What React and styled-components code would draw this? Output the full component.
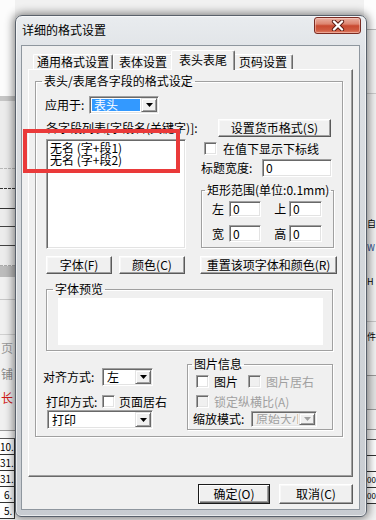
import React from 'react';
import styled, { createGlobalStyle, css } from 'styled-components';

const FONT = `"Noto Sans CJK SC", "Liberation Sans", sans-serif`;

const GlobalStyle = createGlobalStyle`
  html, body { margin: 0; padding: 0; }
  body { width: 376px; height: 520px; overflow: hidden; background: #f3f3f3; font-family: ${FONT}; }
`;

const Screen = styled.div`
  position: relative;
  width: 376px;
  height: 520px;
  overflow: hidden;
  font-family: ${FONT};
  font-size: 12px;
  color: #000;
`;

/* ---------- background page behind the dialog ---------- */
const Backdrop = styled.div`
  display: flex;
  justify-content: space-between;
  width: 376px;
  height: 520px;
  background: #f1f1f1;
`;

const Strip = styled.div`
  display: flex;
  flex-direction: column;
  width: ${p => p.$w}px;
  overflow: hidden;
`;

const BgCell = styled.div`
  flex: none;
  box-sizing: border-box;
  height: ${p => p.$h}px;
  background: ${p => p.$bg || 'transparent'};
  border-bottom: ${p => p.$line || 'none'};
  border-right: ${p => p.$edge || 'none'};
  color: ${p => p.$color || '#000'};
  font-family: ${FONT};
  font-size: ${p => p.$fs || 10}px;
  line-height: ${p => p.$h - 1}px;
  text-align: ${p => p.$align || 'left'};
  padding: 0 ${p => p.$pr || 0}px 0 ${p => p.$pl || 0}px;
  white-space: nowrap;
`;

const LEFT = [
  { h: 96, bg: '#fcfcfc' },
  { h: 5, bg: '#c6c6c6' },
  { h: 68, bg: '#ececec', line: '1px dashed #b8b8b8' },
  { h: 20, bg: '#ececec', line: '1px dashed #333' },
  { h: 20, bg: '#ececec', line: '1px solid #333' },
  { h: 18, bg: '#ececec', line: '1px solid #444' },
  { h: 19, bg: '#ececec', line: '1px solid #444' },
  { h: 20, bg: '#ececec', line: '1px dashed #aaa' },
  { h: 11, bg: '#bcbcbc' },
  { h: 23, bg: '#f0f0f0', line: '1px solid #c8c8c8' },
  { h: 35, bg: '#f0f0f0', line: '1px solid #d0d0d0' },
  { h: 26, bg: '#f0f0f0', t: '页', color: '#9a9a9a', pl: 1, fs: 12 },
  { h: 26, bg: '#f0f0f0', t: '铺', color: '#8a8a8a', pl: 1, fs: 12 },
  { h: 22, bg: '#f0f0f0', t: '长', color: '#d01818', pl: 1, fs: 12 },
  { h: 22, bg: '#f0f0f0', line: '1px solid #9a9a9a' },
  { h: 8, bg: '#f7f7f7', line: '1px solid #555' },
  { h: 16, bg: '#fff', t: '10.', pl: 0, line: '1px solid #333', edge: '1px solid #333' },
  { h: 16, bg: '#fff', t: '31.', pl: 0, line: '1px solid #333', edge: '1px solid #333' },
  { h: 16, bg: '#fff', t: '31.', pl: 0, line: '1px solid #333', edge: '1px solid #333' },
  { h: 16, bg: '#fff', t: '6.', pl: 4, line: '1px solid #333', edge: '1px solid #333' },
  { h: 16, bg: '#fff', t: '5.', pl: 4, line: '1px solid #333', edge: '1px solid #333' },
];

const RIGHT = [
  { h: 30, bg: '#fdfdfd', line: '1px solid #bbb' },
  { h: 64, bg: '#f4f4f4', line: '1px solid #ccc' },
  { h: 120, bg: '#f2f2f2' },
  { h: 20, bg: '#f2f2f2', t: '自', pl: 3, fs: 9 },
  { h: 28, bg: '#f2f2f2', t: 'W', color: '#2a4a8a', pl: 3, fs: 9 },
  { h: 40, bg: '#f2f2f2', t: 'H', pl: 3, fs: 9 },
  { h: 20, bg: '#f2f2f2', line: '1px solid #c8c8c8' },
  { h: 30, bg: '#f2f2f2', t: '件', pl: 3, fs: 9 },
  { h: 24, bg: '#f2f2f2', line: '1px solid #9a9a9a' },
  { h: 34, bg: '#e4e4e4', line: '1px solid #9a9a9a' },
  { h: 20, bg: '#f2f2f2', line: '1px solid #999' },
  { h: 10, bg: '#f7f7f7', line: '1px solid #555' },
  { h: 16, bg: '#fff', line: '1px solid #333' },
  { h: 16, bg: '#fff', line: '1px solid #333' },
  { h: 16, bg: '#fff', t: '00', pl: 3, fs: 8, line: '1px solid #333' },
  { h: 16, bg: '#fff', t: '00', pl: 3, fs: 8, line: '1px solid #333' },
];

/* ---------- window ---------- */
const Window = styled.div`
  position: absolute;
  left: 15px;
  top: 15px;
  width: 352px;
  height: 502px;
  box-sizing: border-box;
  display: flex;
  flex-direction: column;
  border: 1px solid #59616b;
  border-radius: 7px 7px 6px 6px;
  background: linear-gradient(180deg, #e9ecef 0%, #dde0e4 10%, #d3d7db 55%, #c8ccd1 100%);
  box-shadow: 0 0 8px 2px rgba(0, 0, 0, 0.45), inset 0 0 0 1px rgba(255, 255, 255, 0.6);
`;

const TitleBar = styled.div`
  flex: none;
  display: flex;
  align-items: flex-start;
  justify-content: space-between;
  height: 29px;
  padding: 0 5px 0 6px;
`;

const Title = styled.div`
  margin-top: 7px;
  font-size: 12px;
  line-height: 14px;
  color: #000;
`;

const CloseButton = styled.div`
  margin-top: 1px;
  width: 47px;
  height: 17px;
  box-sizing: border-box;
  display: flex;
  align-items: center;
  justify-content: center;
  border: 1px solid #7a2b22;
  border-radius: 3px;
  background: linear-gradient(180deg, #eab0a2 0%, #dd8570 40%, #c94a31 52%, #cf5a40 80%, #e08068 100%);
  box-shadow: inset 0 0 0 1px rgba(255, 220, 210, 0.45);
`;

const Client = styled.div`
  flex: 1;
  margin: 0 6px 6px 5px;
  box-sizing: border-box;
  border: 1px solid #8e969e;
  background: #f0f0f0;
  display: flex;
  flex-direction: column;
`;

const TabStrip = styled.div`
  display: flex;
  align-items: flex-end;
  height: 19px;
  margin-top: 4px;
  padding-left: 11px;
`;

const Tab = styled.div`
  box-sizing: border-box;
  width: ${p => p.$w}px;
  height: 15px;
  display: flex;
  align-items: center;
  justify-content: center;
  border: 1px solid;
  border-bottom: none;
  border-color: #fff #696969 transparent #fff;
  border-radius: 2px 2px 0 0;
  box-shadow: inset -1px 0 0 #a0a0a0;
  font-size: 12px;
  line-height: 14px;
  white-space: nowrap;
  ${p => p.$active && css`
    position: relative;
    z-index: 1;
    width: ${p.$w + 4}px;
    height: 20px;
    margin: 0 -2px -1px;
    padding-bottom: 2px;
    background: #f0f0f0;
  `}
`;

const TabPage = styled.div`
  box-sizing: border-box;
  height: 408px;
  margin: 0 6px;
  padding: 4px 0 0 6px;
  border: 1px solid;
  border-color: #fff #696969 #696969 #fff;
  box-shadow: inset -1px -1px 0 #a0a0a0;
`;

const Group = styled.fieldset`
  box-sizing: border-box;
  width: ${p => p.$w}px;
  margin: ${p => p.$mt || 0}px 0 0 ${p => p.$ml || 0}px;
  padding: 0;
  min-width: 0;
  border: 1px solid #a0a0a0;
  box-shadow: inset 1px 1px 0 #fff, 1px 1px 0 #fff;
`;

const Legend = styled.legend`
  margin-left: ${p => p.$ml}px;
  padding: 0 2px;
  font-size: 12px;
  line-height: 14px;
  color: #000;
`;

const GroupBody = styled.div`
  display: flex;
  flex-direction: column;
  padding: 0 8px 6px 10px;
`;

const Row = styled.div`
  display: flex;
  align-items: center;
  height: ${p => p.$h}px;
  margin-top: ${p => p.$mt || 0}px;
  margin-left: ${p => p.$ml || 0}px;
  justify-content: ${p => p.$justify || 'flex-start'};
`;

const Label = styled.span`
  flex: none;
  width: ${p => (p.$w ? `${p.$w}px` : 'auto')};
  margin-left: ${p => p.$ml || 0}px;
  font-size: 12px;
  line-height: 14px;
  white-space: nowrap;
  text-align: ${p => p.$align || 'left'};
  color: ${p => (p.$disabled ? '#a0a0a0' : '#000')};
`;

const sunken = css`
  box-sizing: border-box;
  border: 1px solid;
  border-color: #a0a0a0 #fff #fff #a0a0a0;
  box-shadow: inset 1px 1px 0 #696969, inset -1px -1px 0 #e3e3e3;
`;

const TextBox = styled.div`
  ${sunken};
  flex: none;
  width: ${p => p.$w}px;
  height: ${p => p.$h}px;
  margin-right: ${p => p.$mr || 0}px;
  background: #fff;
  padding: 0 3px;
  font-size: 12px;
  line-height: ${p => p.$h - 2}px;
`;

const ListBox = styled.div`
  ${sunken};
  height: 110px;
  background: #fff;
  padding: 2px 3px;
  display: flex;
  flex-direction: column;
`;

const ListItem = styled.div`
  height: 12px;
  font-size: 12px;
  line-height: 12px;
  white-space: nowrap;
`;

const Combo = styled.div`
  ${sunken};
  flex: none;
  display: flex;
  width: ${p => p.$w}px;
  height: ${p => p.$h}px;
  margin-left: ${p => p.$ml || 0}px;
  padding: 1px;
  background: ${p => (p.$disabled ? '#f0f0f0' : '#fff')};
`;

const ComboText = styled.div`
  flex: 1;
  min-width: 0;
  white-space: nowrap;
  font-size: 12px;
  line-height: 12px;
  display: flex;
  align-items: center;
  padding-left: 2px;
  margin: 1px;
  ${p => p.$clip && css`overflow: hidden;`}
  color: ${p => (p.$disabled ? '#a0a0a0' : p.$selected ? '#fff' : '#000')};
  background: ${p => (p.$selected ? '#3399ff' : 'transparent')};
`;

const ComboArrow = styled.div`
  flex: none;
  box-sizing: border-box;
  width: 16px;
  display: flex;
  align-items: center;
  justify-content: center;
  background: #f0f0f0;
  border: 1px solid;
  border-color: #e3e3e3 #696969 #696969 #e3e3e3;
  box-shadow: inset 1px 1px 0 #fff, inset -1px -1px 0 #a0a0a0;
`;

const Button = styled.div`
  box-sizing: border-box;
  flex: none;
  width: ${p => p.$w}px;
  height: ${p => p.$h || 18}px;
  margin-right: ${p => p.$mr || 0}px;
  display: flex;
  align-items: center;
  justify-content: center;
  background: #f0f0f0;
  border: 1px solid;
  border-color: #fff #5a5a5a #5a5a5a #fff;
  box-shadow: inset -1px -1px 0 #a0a0a0, inset 1px 1px 0 #f8f8f8;
  font-size: 12px;
  line-height: 14px;
  white-space: nowrap;
  ${p => p.$default && css`
    border-color: #1a1a1a;
    box-shadow: inset 1px 1px 0 #fff, inset -1px -1px 0 #696969, inset -2px -2px 0 #a0a0a0;
  `}
`;

const Check = styled.span`
  ${sunken};
  flex: none;
  display: inline-block;
  width: 13px;
  height: 13px;
  margin-right: ${p => p.$mr || 5}px;
  background: ${p => (p.$disabled ? '#f0f0f0' : '#fff')};
`;

const TwoCols = styled.div`
  display: grid;
  grid-template-columns: 140px 134px;
  column-gap: 14px;
  margin-top: ${p => p.$mt || 0}px;
  height: ${p => (p.$h ? `${p.$h}px` : 'auto')};
`;

const Column = styled.div`
  display: flex;
  flex-direction: column;
`;

const ButtonPair = styled.div`
  display: flex;
  gap: 7px;
`;

const RectGrid = styled.div`
  display: grid;
  grid-template-columns: 17px 32px 28px 33px;
  align-items: center;
  height: ${p => p.$h}px;
  margin-top: ${p => p.$mt}px;
  padding-left: 10px;
`;

const RectFoot = styled.div`
  height: 5px;
`;

const PreviewArea = styled.div`
  height: 47px;
  margin: 2px 9px 5px 11px;
  background: #fff;
`;

const BottomCols = styled.div`
  display: grid;
  grid-template-columns: 141px 146px;
  margin-top: 6px;
`;

const PicBody = styled.div`
  display: flex;
  flex-direction: column;
  padding: 0 0 2px 8px;
`;

const DialogButtons = styled.div`
  display: flex;
  justify-content: flex-end;
  gap: 9px;
  margin-top: 7px;
  padding-right: 6px;
`;

const Annotation = styled.div`
  position: absolute;
  left: 23px;
  top: 129px;
  width: 157px;
  height: 44px;
  box-sizing: border-box;
  border: 4px solid #ea3a3a;
`;

const Arrow = ({ disabled }) => (
  <svg width="7" height="4" viewBox="0 0 7 4">
    <path d="M0 0 H7 L3.5 4 Z" fill={disabled ? '#a0a0a0' : '#000'} />
  </svg>
);

const CloseX = () => (
  <svg width="14" height="11" viewBox="0 0 14 11">
    <path d="M3 1.5 L11 9.5 M11 1.5 L3 9.5" stroke="#5a1810" strokeWidth="4.2" strokeLinecap="round" />
    <path d="M3 1.5 L11 9.5 M11 1.5 L3 9.5" stroke="#ffffff" strokeWidth="2.4" strokeLinecap="round" />
  </svg>
);

const Bg = ({ cells }) =>
  cells.map((c, i) => (
    <BgCell
      key={i}
      $h={c.h}
      $bg={c.bg}
      $line={c.line}
      $edge={c.edge}
      $color={c.color}
      $align={c.align}
      $pl={c.pl}
      $pr={c.pr}
      $fs={c.fs}
    >
      {c.t || ''}
    </BgCell>
  ));

export default function App() {
  return (
    <>
      <GlobalStyle />
      <Screen>
        <Backdrop>
          <Strip $w={15}>
            <Bg cells={LEFT} />
          </Strip>
          <Strip $w={12}>
            <Bg cells={RIGHT} />
          </Strip>
        </Backdrop>

        <Window>
          <TitleBar>
            <Title>详细的格式设置</Title>
            <CloseButton>
              <CloseX />
            </CloseButton>
          </TitleBar>

          <Client>
            <TabStrip>
              <Tab $w={80}>通用格式设置</Tab>
              <Tab $w={60}>表体设置</Tab>
              <Tab $w={60} $active>表头表尾</Tab>
              <Tab $w={60}>页码设置</Tab>
            </TabStrip>

            <TabPage>
              <Group $w={308}>
                <Legend $ml={6}>表头/表尾各字段的格式设定</Legend>
                <GroupBody>
                  <Row $h={18} $mt={8}>
                    <Label $w={44} $ml={-1}>应用于:</Label>
                    <Combo $w={70} $h={18}>
                      <ComboText $selected>表头</ComboText>
                      <ComboArrow>
                        <Arrow />
                      </ComboArrow>
                    </Combo>
                  </Row>

                  <Row $h={18} $mt={5} $justify="space-between">
                    <Label>各字段列表[字段名(关键字)]:</Label>
                    <Button $w={113} $mr={3}>设置货币格式(S)</Button>
                  </Row>

                  <TwoCols $mt={2}>
                    <ListBox>
                      <ListItem>无名 (字+段1)</ListItem>
                      <ListItem>无名 (字+段2)</ListItem>
                    </ListBox>
                    <Column>
                      <Row $h={13} $mt={3} $ml={4}>
                        <Check $mr={6} />
                        <Label>在值下显示下标线</Label>
                      </Row>
                      <Row $h={18} $mt={4} $ml={1} $justify="space-between">
                        <Label>标题宽度:</Label>
                        <TextBox $w={70} $h={18} $mr={2}>0</TextBox>
                      </Row>
                      <Group $w={133} $mt={6} $ml={1}>
                        <Legend $ml={3}>矩形范围(单位:0.1mm)</Legend>
                        <RectGrid $h={16} $mt={4}>
                          <Label>左</Label>
                          <TextBox $w={32} $h={16}>0</TextBox>
                          <Label $align="right">上&nbsp;</Label>
                          <TextBox $w={33} $h={16}>0</TextBox>
                        </RectGrid>
                        <RectGrid $h={17} $mt={8}>
                          <Label>宽</Label>
                          <TextBox $w={32} $h={17}>0</TextBox>
                          <Label $align="right">高&nbsp;</Label>
                          <TextBox $w={33} $h={17}>0</TextBox>
                        </RectGrid>
                        <RectFoot />
                      </Group>
                    </Column>
                  </TwoCols>

                  <TwoCols $mt={7} $h={18}>
                    <ButtonPair>
                      <Button $w={66}>字体(F)</Button>
                      <Button $w={66}>颜色(C)</Button>
                    </ButtonPair>
                    <Button $w={137}>重置该项字体和颜色(R)</Button>
                  </TwoCols>

                  <Group $w={287} $mt={8}>
                    <Legend $ml={6}>字体预览</Legend>
                    <PreviewArea />
                  </Group>

                  <BottomCols>
                    <Column>
                      <Row $h={18} $mt={11} $ml={-3}>
                        <Label $w={59}>对齐方式:</Label>
                        <Combo $w={51} $h={18}>
                          <ComboText>左</ComboText>
                          <ComboArrow>
                            <Arrow />
                          </ComboArrow>
                        </Combo>
                      </Row>
                      <Row $h={13} $mt={9}>
                        <Label $w={56}>打印方式:</Label>
                        <Check $mr={4} />
                        <Label>页面居右</Label>
                      </Row>
                      <Row $h={19} $mt={2}>
                        <Combo $w={106} $h={19} $ml={1}>
                          <ComboText>打印</ComboText>
                          <ComboArrow>
                            <Arrow />
                          </ComboArrow>
                        </Combo>
                      </Row>
                    </Column>

                    <Group $w={146}>
                      <Legend $ml={4}>图片信息</Legend>
                      <PicBody>
                        <Row $h={13} $mt={4}>
                          <Check $mr={5} />
                          <Label $w={34}>图片</Label>
                          <Check $disabled $mr={5} />
                          <Label $disabled>图片居右</Label>
                        </Row>
                        <Row $h={13} $mt={7}>
                          <Check $disabled $mr={5} />
                          <Label $disabled>锁定纵横比(A)</Label>
                        </Row>
                        <Row $h={16} $mt={3} $ml={-3}>
                          <Label $w={58}>缩放模式:</Label>
                          <Combo $w={66} $h={16} $disabled>
                            <ComboText $disabled $clip>原始大小</ComboText>
                            <ComboArrow>
                              <Arrow disabled />
                            </ComboArrow>
                          </Combo>
                        </Row>
                      </PicBody>
                    </Group>
                  </BottomCols>
                </GroupBody>
              </Group>
            </TabPage>

            <DialogButtons>
              <Button $w={72} $h={20} $default>确定(O)</Button>
              <Button $w={74} $h={20}>取消(C)</Button>
            </DialogButtons>
          </Client>
        </Window>

        <Annotation />
      </Screen>
    </>
  );
}
